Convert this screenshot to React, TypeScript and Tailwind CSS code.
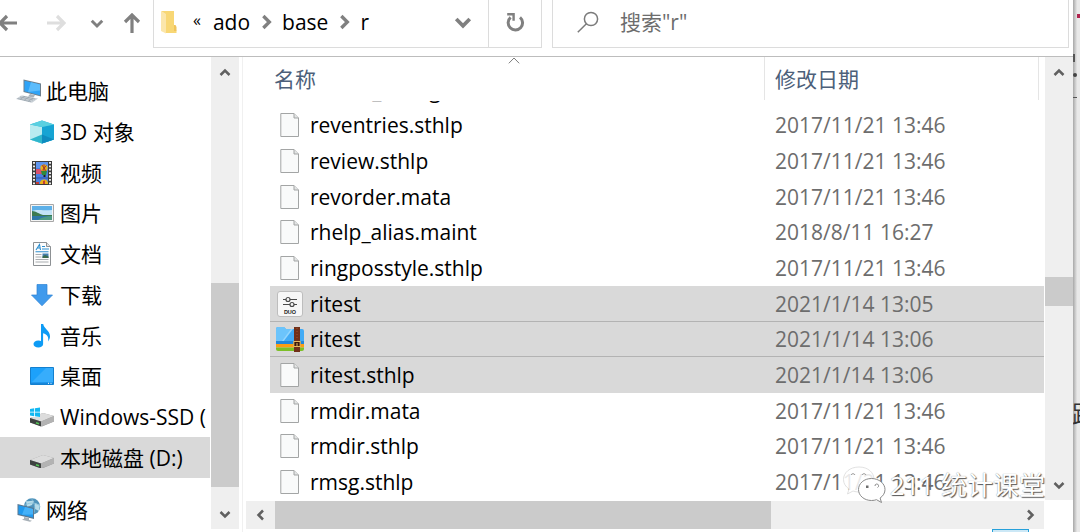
import React from "react";
import { clsx } from "clsx";

type IconProps = { className?: string };
type Direction = "up" | "down" | "left" | "right";

interface TreeItem {
  label: string;
  icon: React.ReactNode;
  active?: boolean;
}

interface FileItem {
  name: string;
  date: string;
  kind?: "file" | "duo" | "zip";
  selected?: boolean;
}

const CHEVRONS: Record<Direction, string> = {
  up: "M1.5 8 6 3.5 10.5 8",
  down: "M1.5 4 6 8.5 10.5 4",
  left: "M8 1.5 3.5 6 8 10.5",
  right: "M4 1.5 8.5 6 4 10.5",
};

function Chevron({ dir, className }: { dir: Direction; className?: string }) {
  return (
    <svg viewBox="0 0 12 12" fill="none" stroke="currentColor" strokeWidth="2.5" className={clsx("shrink-0", className)}>
      <path d={CHEVRONS[dir]} />
    </svg>
  );
}

function ArrowIcon({ dir, className }: { dir: Direction; className?: string }) {
  const paths: Record<Direction, string> = {
    left: "M19 10H2M9 3 2 10l7 7",
    right: "M1 10h17M11 3l7 7-7 7",
    up: "M10 20V2M3 9l7-7 7 7",
    down: "M10 0v18M3 11l7 7 7-7",
  };
  return (
    <svg viewBox="0 0 20 20" fill="none" stroke="currentColor" strokeWidth="3.2" className={clsx("h-5 w-5 shrink-0", className)}>
      <path d={paths[dir]} />
    </svg>
  );
}

function RefreshIcon() {
  return (
    <svg viewBox="0 0 20 20" fill="none" stroke="currentColor" strokeWidth="3" className="h-5 w-5">
      <path d="M5.6 5.400A7.200 7.200 0 1 0 15 5.300" />
      <path d="M2.200 2.200H8.600V8.800" strokeWidth="2.400" />
    </svg>
  );
}

function SearchIcon() {
  return (
    <svg viewBox="0 0 22 22" fill="none" stroke="#7b7b7b" strokeWidth="1.5" className="h-[22px] w-[22px] shrink-0">
      <circle cx="14" cy="8" r="6.6" />
      <path d="M9.4 12.8.8 21.2" />
    </svg>
  );
}

function FolderIcon() {
  return (
    <svg viewBox="0 0 17 24" className="h-6 w-[17px] shrink-0">
      <path d="M1 1h13v19l2.5.5V23H5V4z" fill="#f8d775" />
      <path d="M14 15h1.5l1 2v4H14z" fill="#f0c45c" />
      <path d="M1 1l5 3v19.5L1 21z" fill="#fbe6ab" />
    </svg>
  );
}

function ComputerIcon() {
  return (
    <svg viewBox="0 0 26 24" className="h-6 w-[26px]">
      <path d="M7.5.5 25 4.5v13L7.5 13z" fill="#6d7f8d" />
      <path d="M8.5 1.8 24 5.4v10.8L8.5 12.2z" fill="#2ea3f7" />
      <path d="M15 3.3 24 5.4v6L12 13z" fill="#5cbcfb" />
      <path d="M5 16.5 22 19.5 16 23.8 0 20z" fill="#c9d0d6" />
      <path d="M4 18l13 3M6.5 17 19 20M1.5 19.5 15 22.8M9 17.2l-5 3.3M13 18l-5 3.5M17 19l-5 3.5" stroke="#98a3ac" strokeWidth=".7" />
      <path d="M14 15l5 1.3-1.5 2.2-5.5-1z" fill="#aab3bb" />
    </svg>
  );
}

function CubeIcon() {
  return (
    <svg viewBox="0 0 24 24" className="h-6 w-6">
      <path d="M12 .5 24 4.500v15L12 23.500 0 19.500v-15z" fill="#29b5d8" />
      <path d="M0 4.500 12 7v16.500L0 19.500z" fill="#b9ebf0" />
      <path d="M0 19.500 12 14.500v9z" fill="#2fb6cc" />
      <path d="M12 7 24 4.500v15l-12 4z" fill="#16a4d3" />
      <path d="M12 23.500v-9l12 5z" fill="#0f8cbf" />
      <path d="M12 .500 24 4.500 12 7 0 4.500z" fill="#5ad0e0" />
    </svg>
  );
}

function VideoIcon() {
  return (
    <svg viewBox="0 0 22 24" className="ml-px h-6 w-[22px]">
      <path d="M1 0h20v24H1z" fill="#3c3c3c" />
      <path d="M5 1h12v22H5z" fill="#4a7fe0" />
      <path d="M5 1h12v6H5z" fill="#5f95ee" />
      <path d="M3 1v23M19 1v23" stroke="#ededed" strokeWidth="2" strokeDasharray="1.8 1.6" />
      <circle cx="13" cy="7" r="3.6" fill="#e9b21c" />
      <path d="M11 4l4 6M13 3.4v7M15.4 4.4l-4 5" stroke="#a02f27" strokeWidth=".9" />
      <path d="M5 8h4l3 3v2H5z" fill="#d8506e" />
      <path d="M10 10h6l-1 4h-4z" fill="#2d8a3c" />
      <path d="M12.5 14h2v2h-2z" fill="#24211c" />
      <path d="M9 23a4 4 0 0 1 8-1v1z" fill="#e9b21c" />
      <path d="M12 20v3h2v-3.5zM5 21h3v2H5z" fill="#c43c35" />
      <path d="M5 17h12" stroke="#2c54a8" />
    </svg>
  );
}

function PictureIcon() {
  return (
    <svg viewBox="0 0 24 20" className="h-5 w-6">
      <path d="M.5 1.5h23v17H.5z" fill="#f4f4f4" stroke="#a7a7a7" />
      <path d="M2 3h20v14H2z" fill="#5db0e8" />
      <path d="M2 8c5-2 9 0 20-1v5H2z" fill="#c4e4f7" />
      <path d="M2 8c4 0 7 3 11 4h9v1H2z" fill="#3d7a50" />
      <path d="M2 13h20v4H2z" fill="#2f77a6" />
      <path d="M8 17c4-3 9-4 14-4v4z" fill="#4f9b83" />
    </svg>
  );
}

function DocumentIcon() {
  return (
    <svg viewBox="0 0 20 24" className="ml-0.5 h-6 w-5">
      <path d="M1.5.5h13l4 4v19h-17z" fill="#fdfdfd" stroke="#8d9194" />
      <path d="M14.5.5v4h4" fill="#e2e4e5" stroke="#8d9194" />
      <path d="M4 8 7.5 2.5 8.5 8M5.3 6h3M10 4.5h3M10 7h7M3.5 9.8h13" fill="none" stroke="#2c8fd0" strokeWidth="1.1" />
      <path d="M3.5 12.5h6M3.5 15h6M3.5 17.5h13M3.5 20h13" stroke="#a9adb0" />
      <path d="M10.5 11.5h6v4.5h-6z" fill="#447fae" />
      <path d="M10.5 14.5 13 13l3.5 1.6V16h-6z" fill="#3b6b4c" />
    </svg>
  );
}

function DownloadIcon() {
  return (
    <svg viewBox="0 0 24 24" className="h-6 w-6">
      <path d="M7 1.5h10v10.5h5.5L12 22.8 1.5 12H7z" fill="#3f9aec" stroke="#2b82d4" strokeWidth=".7" />
    </svg>
  );
}

function MusicIcon() {
  return (
    <svg viewBox="0 0 24 24" className="h-6 w-6">
      <ellipse cx="8.3" cy="20" rx="4.8" ry="3.6" fill="#0d9bf5" />
      <path d="M11 0h2.2c.5 4.5 6.8 6.5 6.8 12.3 0 2.1-.7 3.7-1.9 5.2.8-4.2-.6-7.2-5-8.3V20H11z" fill="#0d9bf5" />
    </svg>
  );
}

function DesktopIcon() {
  return (
    <svg viewBox="0 0 24 18" className="h-[18px] w-6">
      <path d="M.5.5h23v17H.5z" fill="#1ca1fb" stroke="#1480cf" />
      <path d="M1 16 16 1h7v14z" fill="#37adfc" />
      <path d="M1 15.5h22V17H1z" fill="#1686da" />
      <path d="M18 16.3h1M20.5 16.3h1" stroke="#fff" />
    </svg>
  );
}

function DriveIcon({ windows }: { windows?: boolean }) {
  return (
    <svg viewBox="0 0 24 20" className="h-5 w-6">
      <g className={windows ? "" : "translate-y-px"}>
        <path d="M0 11 13 6 24 9v5.500L12 19.500 0 15.500z" fill="#9a9a9a" />
        <path d="M0 11 13 6 24 9 11 14.500z" fill="#dcdcdc" />
        <path d="M0 11 11 14.500v5L0 15.500z" fill="#3e4240" />
        <path d="M11 14.500 24 9v5.500l-13 5z" fill="#b3b3b3" />
        <path d="M6 15.800l3 .9" stroke="#53c653" strokeWidth="1.5" />
      </g>
      {windows && (
        <>
          <path d="M0 0h10v10H0z" fill="#fff" />
          <path d="M0 2 4.2 1.3v3.5H0zM5 1.2 10 .4v4.4H5zM0 5.6h4.2v3.6L0 8.6zM5 5.6h5V10l-5-.7z" fill="#12b8f2" />
        </>
      )}
    </svg>
  );
}

function NetworkIcon() {
  return (
    <svg viewBox="0 0 26 24" className="h-6 w-[26px]">
      <circle cx="16" cy="8.5" r="8.2" fill="#4f93bb" />
      <path d="M10 3c3 1 5-1 8 0l-2 4-5 2zM19 5l5 2-1 6-4-2z" fill="#b7dcea" />
      <path d="M8 8c5-4 11-4 16 0M15 0c4 5 5 11 2 17" fill="none" stroke="#8cc0d8" strokeWidth=".8" />
      <path d="M1.5 6 18 10v11L1.5 17z" fill="#5a7891" />
      <path d="M2.5 7.3 17 10.9v8.7L2.5 16z" fill="#2099ee" />
      <path d="M9 9 17 10.9v5.5L6 16.8z" fill="#45b1f8" />
      <path d="M8 19l5 1v2l3 .8-2 1-8-2 2-1z" fill="#a7b0b7" />
    </svg>
  );
}

function PageIcon() {
  return (
    <svg viewBox="0 0 20 24" className="h-6 w-5">
      <path d="M.8.5H14l4.5 4.500v18.500H.8z" fill="#f9fafa" stroke="#a3a5a5" />
      <path d="M14 .5V5h4.500" fill="#e3e5e5" stroke="#a3a5a5" />
    </svg>
  );
}

function DuoIcon() {
  return (
    <svg viewBox="0 0 26 26" className="h-[26px] w-[26px]">
      <rect x=".5" y=".5" width="25" height="25" rx="2.5" fill="#f7f7f7" stroke="#bdbdbd" />
      <path d="M6 8.5h3M13 8.5h7M6 13.5h7M17 13.5h3" stroke="#4a4a4a" strokeWidth="1.2" />
      <circle cx="11" cy="8.5" r="2" fill="none" stroke="#4a4a4a" strokeWidth="1.2" />
      <circle cx="15" cy="13.5" r="2" fill="none" stroke="#4a4a4a" strokeWidth="1.2" />
      <text x="13" y="22.5" textAnchor="middle" fontSize="5.5" fontWeight="700" fill="#222" fontFamily="Liberation Sans, sans-serif">DUO</text>
    </svg>
  );
}

function ZipIcon() {
  return (
    <svg viewBox="0 0 28 26" className="h-[26px] w-7">
      <path d="M0 3a2 2 0 0 1 2-2h6l2 2h16a2 2 0 0 1 2 2v11H0z" fill="#42abf5" />
      <path d="M0 3a2 2 0 0 1 2-2h6l2 2h6L5 16H0z" fill="#6cc4fb" />
      <path d="M15 3h2L7 16H5z" fill="#93d5fd" />
      <path d="M0 15h28v3.5H0z" fill="#1f87dc" />
      <path d="M0 18h28v3.5H0z" fill="#fb9d13" />
      <path d="M0 21.5h28V23a2 2 0 0 1-2 2H2a2 2 0 0 1-2-2z" fill="#7cbf27" />
      <path d="M18 1h6v25h-6z" fill="#713019" />
      <path d="M21 2v12" stroke="#a5532a" strokeDasharray="1 2" />
      <path d="M17.8 15.5h6.4v5h-6.4z" fill="#3c170b" stroke="#e7b85d" strokeWidth="1.1" />
      <path d="M21 17v4" stroke="#e7b85d" />
    </svg>
  );
}

function WechatIcon({ className }: IconProps) {
  return (
    <svg viewBox="0 0 44 38" fill="#fff" className={clsx("h-[38px] w-11", className)}>
      <path d="M17 1C8 1 1.5 6.5 1.5 13.5c0 4 2 7 5.5 9.5l-1.500 5 5.500-3c2 .7 4 1 6 1 9 0 15-5.500 15-12.500S26 1 17 1z" fillOpacity=".85" stroke="#d9d9d9" strokeWidth=".8" />
      <path d="M29.5 12.5c-7.500 0-13 5-13 11s5.500 11 13 11c2 0 3.500-.3 5-.8l5 2.800-1.400-4.500c3-2 4.900-5 4.900-8.500 0-6-6-11-13.500-11z" stroke="#8a8a8a" />
      <path d="M9 9a2.200 2.200 0 0 1 4 0M20 9a2.200 2.200 0 0 1 4 0" fill="none" stroke="#9a9a9a" />
      <path d="M24 19.500h2.500v2.500H24z" fill="#6d6d6d" />
      <path d="M33 20a1.800 1.800 0 1 1 2.500 1.500" fill="none" stroke="#8a8a8a" />
    </svg>
  );
}

const TREE: TreeItem[] = [
  { label: "3D 对象", icon: <CubeIcon /> },
  { label: "视频", icon: <VideoIcon /> },
  { label: "图片", icon: <PictureIcon /> },
  { label: "文档", icon: <DocumentIcon /> },
  { label: "下载", icon: <DownloadIcon /> },
  { label: "音乐", icon: <MusicIcon /> },
  { label: "桌面", icon: <DesktopIcon /> },
  { label: "Windows-SSD (", icon: <DriveIcon windows /> },
  { label: "本地磁盘 (D:)", icon: <DriveIcon />, active: true },
];

const FILES: FileItem[] = [
  { name: "return_config.ado", date: "" },
  { name: "reventries.sthlp", date: "2017/11/21 13:46" },
  { name: "review.sthlp", date: "2017/11/21 13:46" },
  { name: "revorder.mata", date: "2017/11/21 13:46" },
  { name: "rhelp_alias.maint", date: "2018/8/11 16:27" },
  { name: "ringposstyle.sthlp", date: "2017/11/21 13:46" },
  { name: "ritest", date: "2021/1/14 13:05", kind: "duo", selected: true },
  { name: "ritest", date: "2021/1/14 13:06", kind: "zip", selected: true },
  { name: "ritest.sthlp", date: "2021/1/14 13:06", selected: true },
  { name: "rmdir.mata", date: "2017/11/21 13:46" },
  { name: "rmdir.sthlp", date: "2017/11/21 13:46" },
  { name: "rmsg.sthlp", date: "2017/11/21 13:46" },
];

function Toolbar() {
  return (
    <header className="flex h-[57px] shrink-0 items-start border-b border-[#bdbdbd] pr-1">
      <nav className="flex h-[46px] w-[153px] shrink-0 items-center text-[#808080]">
        <button type="button" aria-label="后退" className="-ml-0.5">
          <ArrowIcon dir="left" />
        </button>
        <button type="button" aria-label="前进" className="ml-7 text-[#dedede]">
          <ArrowIcon dir="right" />
        </button>
        <button type="button" aria-label="最近" className="ml-6">
          <Chevron dir="down" className="h-3.5 w-3.5" />
        </button>
        <button type="button" aria-label="上移" className="ml-[18px]">
          <ArrowIcon dir="up" />
        </button>
      </nav>

      <div className="flex h-12 w-[389px] shrink-0 border border-t-0 border-[#dcdcdc]">
        <div className="flex flex-1 items-center pb-1 pl-1.5">
          <FolderIcon />
          <span className="ml-4 pb-1 text-base">«</span>
          <button type="button" className="ml-3">ado</button>
          <Chevron dir="right" className="ml-2 h-4 w-4 text-[#808080]" />
          <button type="button" className="ml-2">base</button>
          <Chevron dir="right" className="ml-2 h-4 w-4 text-[#808080]" />
          <button type="button" className="ml-2">r</button>
          <button type="button" aria-label="以前的位置" className="mr-4 ml-auto text-[#808080]">
            <Chevron dir="down" className="h-[18px] w-[18px]" />
          </button>
        </div>
        <button type="button" aria-label="刷新" className="flex w-[53px] items-center justify-center border-l border-[#dcdcdc] pb-1 text-[#808080]">
          <RefreshIcon />
        </button>
      </div>

      <label className="ml-2.5 flex h-12 flex-1 items-center border border-t-0 border-[#dcdcdc] pb-1 pl-6">
        <SearchIcon />
        <input type="text" aria-label="搜索" placeholder={'搜索"r"'} className="ml-[21px] min-w-0 flex-1 outline-none placeholder:text-[#6d6d6d]" />
      </label>
    </header>
  );
}

function VerticalScrollbar({ children, className }: { children: React.ReactNode; className?: string }) {
  return (
    <div className={clsx("flex w-7 shrink-0 flex-col bg-[#efefef] text-[#606060]", className)}>
      <button type="button" aria-label="向上滚动" className="flex h-8 items-center justify-center">
        <Chevron dir="up" className="h-3 w-3" />
      </button>
      <div className="flex flex-1 flex-col">{children}</div>
      <button type="button" aria-label="向下滚动" className="flex h-[30px] items-center justify-center">
        <Chevron dir="down" className="h-3 w-3" />
      </button>
    </div>
  );
}

function Sidebar() {
  return (
    <aside className="flex w-[243px] shrink-0 border-r border-[#f0f0f0]">
      <div className="w-[210px] overflow-hidden pt-3.5 whitespace-nowrap">
        <ul className="grid h-[407px] auto-rows-fr">
          <li>
            <a href="#pc" className="flex h-full items-center gap-1 pl-4">
              <ComputerIcon />
              此电脑
            </a>
          </li>
          {TREE.map((item) => (
            <li key={item.label} className={clsx(item.active && "bg-[#d9d9d9]")}>
              <a href="#folder" className="flex h-full items-center pl-[30px]">
                <span className="flex w-[30px] items-center">{item.icon}</span>
                {item.label}
              </a>
            </li>
          ))}
        </ul>
        <a href="#network" className="mt-3 flex h-10 items-center gap-1 pl-4">
          <NetworkIcon />
          网络
        </a>
      </div>
      <VerticalScrollbar className="mb-[3px] ml-px">
        <div className="mt-auto mb-3 h-[204px] bg-[#cbcbcb]" />
      </VerticalScrollbar>
    </aside>
  );
}

function FileIcon({ kind }: { kind?: FileItem["kind"] }) {
  if (kind === "duo") return <DuoIcon />;
  if (kind === "zip") return <ZipIcon />;
  return <PageIcon />;
}

function FileList() {
  return (
    <main className="flex min-w-0 flex-1 flex-col">
      <div className="flex h-11 shrink-0 pb-px pl-[21px] text-[#4c607a]">
        <button type="button" className="relative w-[501px] border-r border-[#e5e5e5] pl-2.5 text-left">
          名称
          <svg viewBox="0 0 12 7" fill="none" stroke="#7d7d7d" className="absolute top-0 left-1/2 h-[7px] w-3 -translate-x-1/2">
            <path d="M.8 6.3 6 1l5.2 5.3" />
          </svg>
        </button>
        <button type="button" className="mr-[5px] flex-1 border-r border-[#e5e5e5] pl-2.5 text-left">
          修改日期
        </button>
      </div>

      <div className="flex min-h-0 flex-1 flex-col justify-end overflow-hidden pb-px pl-[27px]">
        <table className="h-[428px] w-full shrink-0 table-fixed border-collapse">
          <colgroup>
            <col className="w-[495px]" />
            <col />
          </colgroup>
          <tbody>
            {FILES.map((file, i) => (
              <tr key={i} className={clsx(file.selected && "bg-[#d9d9d9]", file.selected && FILES[i + 1].selected && "shadow-[inset_0_-1px_#b3b3b3]")}>
                <td className="p-0">
                  <div className="flex items-center">
                    <span className="flex w-10 justify-center">
                      {file.date && <FileIcon kind={file.kind} />}
                    </span>
                    {file.name}
                  </div>
                </td>
                <td className="p-0 pl-2.5 text-[#6d6d6d]">{file.date}</td>
              </tr>
            ))}
          </tbody>
        </table>
      </div>

      <div className="mb-[3px] ml-[3px] flex h-7 shrink-0 bg-[#efefef] text-[#606060]">
        <button type="button" aria-label="向左滚动" className="flex w-[29px] items-center justify-center">
          <Chevron dir="left" className="h-3 w-3" />
        </button>
        <div className="flex-1">
          <div className="h-full w-[67%] bg-[#cbcbcb]" />
        </div>
        <button type="button" aria-label="向右滚动" className="flex w-[29px] items-center justify-center">
          <Chevron dir="right" className="h-3 w-3" />
        </button>
      </div>
    </main>
  );
}

export default function App() {
  return (
    <div className="relative flex h-screen overflow-hidden bg-white font-['Open_Sans','Noto_Sans_CJK_SC',sans-serif] text-[21px] leading-7 text-black">
      <div className="flex min-w-0 flex-1 flex-col">
        <Toolbar />
        <div className="flex min-h-0 flex-1">
          <Sidebar />
          <FileList />
          <VerticalScrollbar className="mb-8 ml-px">
            <div className="mt-[188px] h-[29px] bg-[#cbcbcb]" />
          </VerticalScrollbar>
        </div>
      </div>

      {/* edge of the window behind */}
      <div className="relative w-[7px] shrink-0 overflow-hidden bg-linear-to-r from-[#a8a8a8] to-[#e9e9e9] to-60%">
        <span className="absolute top-3.5 right-0 h-1 w-[3px] bg-[#b0244f]" />
        <span className="absolute top-[54px] left-0 h-2 w-0.5 bg-[#555]" />
        <span className="absolute top-[73px] left-0 h-1 w-1 rounded-full bg-[#444]" />
        <span className="absolute top-[97px] left-0 h-px w-1 bg-[#555]" />
        <span className="absolute top-[398px] -left-px text-2xl whitespace-nowrap text-[#333]">跟</span>
      </div>

      <button type="button" aria-label="大图标" className="absolute right-[51px] bottom-0 h-[3px] w-[37px] border border-b-0 border-[#26a0da] bg-[#cce8f6]" />

      <div className="absolute right-[35px] bottom-7 flex items-center gap-1 text-[26px] text-white">
        <WechatIcon />
        <span className="[text-shadow:1px_1px_1px_#555,0_0_1px_#888]">211 统计课堂</span>
      </div>
    </div>
  );
}
